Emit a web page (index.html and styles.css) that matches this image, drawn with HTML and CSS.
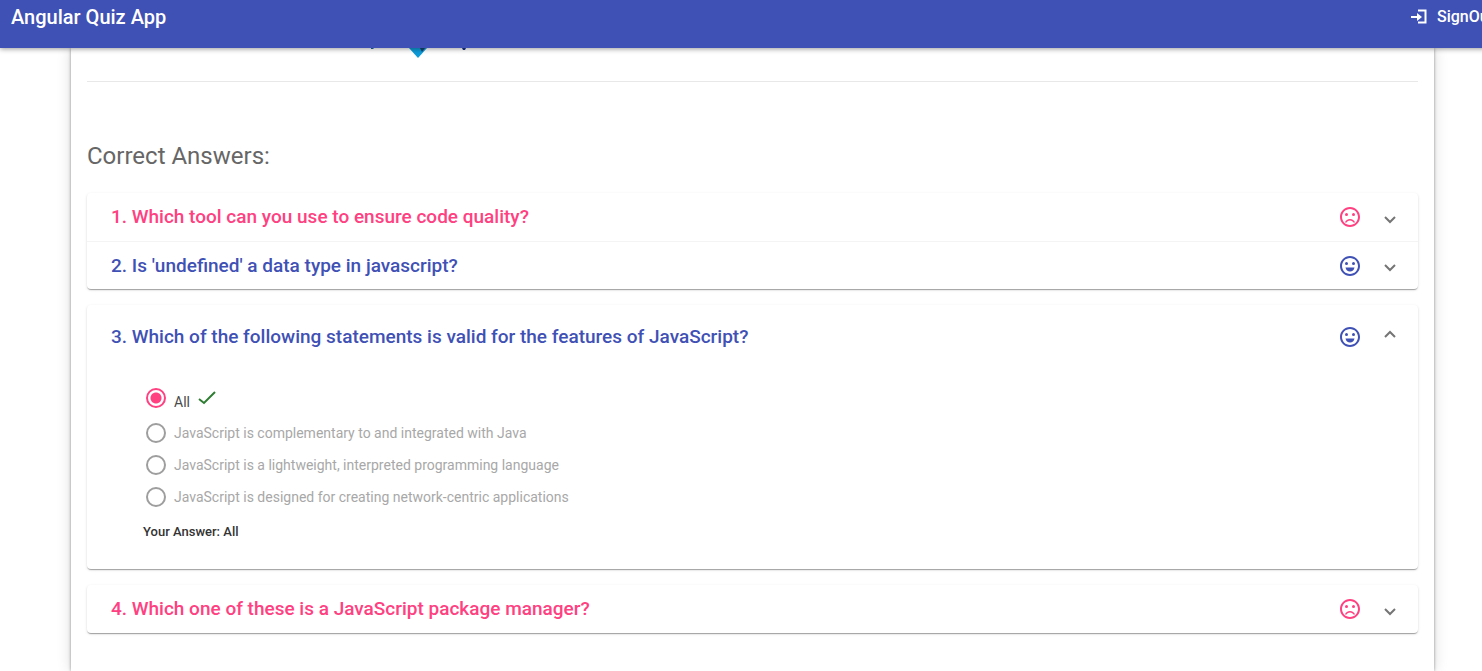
FILE: index.html
```html
<!DOCTYPE html>
<html lang="en">
<head>
<meta charset="utf-8">
<title>Angular Quiz App</title>
<link rel="stylesheet" href="styles.css">
</head>
<body>
<svg class="sprite" aria-hidden="true">
  <symbol id="sad" viewBox="0 0 24 24"><path d="M12 14c-2.330 0-4.320 1.450-5.120 3.500h1.670c.69-1.190 1.970-2 3.450-2s2.750.81 3.450 2h1.670c-.8-2.050-2.790-3.500-5.120-3.500z"/><circle cx="15.500" cy="9.500" r="1.500"/><circle cx="8.500" cy="9.500" r="1.500"/><path d="M11.990 2C6.470 2 2 6.480 2 12s4.470 10 9.990 10C17.520 22 22 17.520 22 12S17.520 2 11.990 2zM12 20c-4.420 0-8-3.580-8-8s3.580-8 8-8 8 3.580 8 8-3.580 8-8 8z"/></symbol>
  <symbol id="happy" viewBox="0 0 24 24"><path d="M7.500 13.500c.4 2.500 2.200 4 4.500 4s4.100-1.500 4.500-4z"/><circle cx="15.500" cy="9.500" r="1.500"/><circle cx="8.500" cy="9.500" r="1.500"/><path d="M11.990 2C6.470 2 2 6.480 2 12s4.470 10 9.990 10C17.520 22 22 17.520 22 12S17.520 2 11.990 2zM12 20c-4.420 0-8-3.580-8-8s3.580-8 8-8 8 3.580 8 8-3.580 8-8 8z"/></symbol>
  <symbol id="down" viewBox="0 0 12 8"><path d="M1 1l5 5 5-5" fill="none" stroke="currentColor" stroke-width="2"/></symbol>
  <symbol id="up" viewBox="0 0 12 8"><path d="M1 7l5-5 5 5" fill="none" stroke="currentColor" stroke-width="2"/></symbol>
</svg>
<header class="toolbar">
  <h1 class="brand">Angular Quiz App</h1>
  <button class="signout" type="button">
    <svg class="signout-icon" viewBox="0 0 16 16" aria-hidden="true"><path d="M0 8h7M7 1.500h7.500v12H7" fill="none" stroke="currentColor" stroke-width="2"/><path d="M6 4l5 4-5 4z" fill="currentColor"/></svg>
    SignOut
  </button>
</header>
<main class="card">
  <div class="banner">
    <svg class="logo" viewBox="0 0 100 10" aria-hidden="true"><path d="M39 0h18l-9 10z" fill="#0d9bd8"/><path d="M50 0h5l-3 4z" fill="#17466f"/><path d="M1 0h3l-1 1H1z" fill="#1769a8"/><path d="M92 0h4l-1 2h-2z" fill="#17338b"/></svg>
  </div>
  <h2 class="heading">Correct Answers:</h2>
  <div class="accordion">
    <section class="panel">
      <button class="question wrong" type="button" aria-expanded="false"><span class="text">1. Which tool can you use to ensure code quality?</span><svg class="face"><use href="#sad"/></svg><svg class="chevron"><use href="#down"/></svg></button>
      <button class="question right ruled" type="button" aria-expanded="false"><span class="text">2. Is 'undefined' a data type in javascript?</span><svg class="face"><use href="#happy"/></svg><svg class="chevron"><use href="#down"/></svg></button>
    </section>
    <section class="panel">
      <button class="question right open" type="button" aria-expanded="true"><span class="text">3. Which of the following statements is valid for the features of JavaScript?</span><svg class="face"><use href="#happy"/></svg><svg class="chevron"><use href="#up"/></svg></button>
      <div class="body">
        <div class="options">
          <label class="option chosen"><input class="radio" type="radio" name="q3" checked><span class="label">All</span><svg class="check" viewBox="0 0 18 14" aria-hidden="true"><path d="M1 8l5 4L17 1" fill="none" stroke="currentColor" stroke-width="2"/></svg></label>
          <label class="option"><input class="radio" type="radio" name="q3" disabled><span class="label">JavaScript is complementary to and integrated with Java</span></label>
          <label class="option"><input class="radio" type="radio" name="q3" disabled><span class="label">JavaScript is a lightweight, interpreted programming language</span></label>
          <label class="option"><input class="radio" type="radio" name="q3" disabled><span class="label">JavaScript is designed for creating network-centric applications</span></label>
        </div>
        <p class="answer">Your Answer: All</p>
      </div>
    </section>
    <section class="panel">
      <button class="question wrong" type="button" aria-expanded="false"><span class="text">4. Which one of these is a JavaScript package manager?</span><svg class="face"><use href="#sad"/></svg><svg class="chevron"><use href="#down"/></svg></button>
    </section>
  </div>
</main>
</body>
</html>
```

FILE: styles.css
```css
* { box-sizing: border-box; }
body {
  margin: 0;
  min-height: 100vh;
  display: flex;
  flex-direction: column;
  overflow: hidden;
  background: #fff;
  font-family: Roboto, "Liberation Sans", sans-serif;
}
button { font: inherit; border: 0; background: none; cursor: pointer; }
.sprite { display: none; }
.toolbar {
  display: flex;
  justify-content: space-between;
  align-items: flex-start;
  height: 48px;
  padding: 4px 0 0 11px;
  margin-right: -12px;
  background: #3f51b5;
  color: #fff;
  box-shadow: 0 1px 5px rgba(0, 0, 0, .4);
  z-index: 1;
}
.brand { margin: 0; font-size: 20px; line-height: 26px; font-weight: 500; }
.signout {
  display: flex;
  align-items: center;
  gap: 10px;
  padding: 0;
  color: inherit;
  font-size: 16px;
  line-height: 26px;
  font-weight: 500;
}
.signout-icon { width: 16px; height: 16px; }
.card {
  flex: 1;
  margin: 0 48px 0 71px;
  padding: 0 16px 38px;
  box-shadow: 0 0 3px rgba(0, 0, 0, .4), 0 0 14px rgba(0, 0, 0, .14);
}
.banner { height: 34px; padding-left: 283px; border-bottom: 1px solid #e8e8e8; }
.logo { display: block; width: 100px; height: 10px; }
.heading {
  margin: 58px 0 21px;
  color: #666;
  font-size: 24px;
  line-height: 32px;
  font-weight: 400;
}
.accordion { display: grid; gap: 16px; }
.panel {
  border-radius: 4px;
  background: #fff;
  box-shadow: 0 2px 1px -1px rgba(0, 0, 0, .2), 0 1px 1px rgba(0, 0, 0, .14), 0 1px 3px rgba(0, 0, 0, .12);
}
.question {
  display: flex;
  align-items: center;
  width: 100%;
  height: 48px;
  padding: 0 22px 0 24px;
  text-align: left;
  font-size: 19px;
  line-height: 24px;
  font-weight: 500;
}
.open { height: 64px; }
.ruled { border-top: 1px solid #f4f4f4; }
.wrong { color: #ff4081; }
.right { color: #3f51b5; }
.text { flex: 1; }
.face { width: 24px; height: 24px; margin-right: 22px; fill: currentColor; }
.chevron { width: 12px; height: 8px; margin-top: 5px; color: #757575; }
.open .chevron { margin: 0 0 6px; }
.body { padding: 17px 24px 27px 56px; }
.options { display: grid; gap: 12px; padding-left: 3px; }
.option { display: flex; align-items: center; gap: 8px; color: #a8a8a8; font-size: 14px; line-height: 20px; }
.chosen { color: #4a4a4a; padding-bottom: 1px; }
.radio {
  appearance: none;
  width: 20px;
  height: 20px;
  margin: 0;
  border: 2px solid #9e9e9e;
  border-radius: 50%;
}
.radio:checked { border-color: #ff4081; background: radial-gradient(circle, #ff4081 5px, transparent 6px); }
.chosen .label { padding-top: 8px; line-height: 16px; }
.check { width: 18px; height: 14px; color: #2e7d32; }
.answer { margin: 15px 0 0; color: #333; font-size: 13px; line-height: 20px; font-weight: 500; }
```
